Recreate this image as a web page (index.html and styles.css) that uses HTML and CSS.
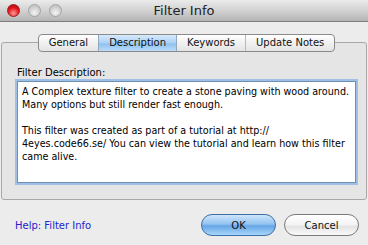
FILE: index.html
```html
<!DOCTYPE html>
<html lang="en">
<head>
    <meta charset="UTF-8">
    <meta name="viewport" content="width=device-width, initial-scale=1.0">
    <title>Filter Info</title>
    <link rel="stylesheet" href="styles.css">
</head>
<body>
    <div class="window">
        <header class="titlebar">
            <div class="lights">
                <span class="light red"></span>
                <span class="light"></span>
                <span class="light"></span>
            </div>
            <h1>Filter Info</h1>
        </header>

        <div class="panel">
            <div class="tabs">
                <span class="tab">General</span>
                <span class="tab active">Description</span>
                <span class="tab">Keywords</span>
                <span class="tab">Update Notes</span>
            </div>

            <label class="field-label">Filter Description:</label>
            <div class="textbox">A Complex texture filter to create a stone paving with wood around.
Many options but still render fast enough.

This filter was created as part of a tutorial at http://
4eyes.code66.se/ You can view the tutorial and learn how this filter
came alive.</div>
        </div>

        <footer class="footer">
            <a class="help-link" href="#">Help: Filter Info</a>
            <div class="buttons">
                <button class="btn btn-default">OK</button>
                <button class="btn">Cancel</button>
            </div>
        </footer>
    </div>
</body>
</html>
```

FILE: styles.css
```css
body {
    margin: 0;
    font-family: "DejaVu Sans", sans-serif;
    font-size: 10px;
    color: #000;
    background-color: #ececec;
}

.window {
    width: 368px;
    height: 245px;
    overflow: hidden;
}

.titlebar {
    height: 22px;
    display: flex;
    align-items: center;
    position: relative;
    background: linear-gradient(#ebebeb, #d2d2d2 50%, #b4b4b4);
    border-bottom: 1px solid #7d7d7d;
    box-sizing: border-box;
}

.lights {
    display: flex;
    gap: 8px;
    padding-left: 7px;
}

.light {
    width: 13px;
    height: 13px;
    border-radius: 50%;
    box-sizing: border-box;
    border: 1px solid #a4a4a4;
    background: radial-gradient(circle at 50% 70%, #f4f4f4, #c6c6c6 70%);
}

.light.red {
    border-color: #9a1c1c;
    background: radial-gradient(circle at 50% 75%, #ff9a9a, #e3151c 55%, #a20b0b);
}

.titlebar h1 {
    position: absolute;
    left: 0;
    right: 0;
    margin: 0;
    text-align: center;
    font-size: 13px;
    font-weight: normal;
    color: #222;
}

.panel {
    margin: 20px 1px 0;
    height: 158px;
    box-sizing: border-box;
    border: 1px solid #a8a8a8;
    border-radius: 3px;
    background-color: #e5e5e5;
    padding: 0 10px 0 15px;
}

.tabs {
    display: flex;
    justify-content: center;
    margin: -9px auto 0;
    width: max-content;
    border: 1px solid #8a8a8a;
    border-radius: 4px;
    background: linear-gradient(#ffffff, #f0f0f0 50%, #e4e4e4);
    overflow: hidden;
}

.tab {
    padding: 0 10px;
    height: 16px;
    line-height: 16px;
    border-left: 1px solid #b8b8b8;
    color: #111;
}

.tab:first-child {
    border-left: none;
}

.tab.active {
    background: linear-gradient(#d8eafb, #a9d0f5 50%, #8ec0ef 55%, #bcdcf9);
    border-left-color: #8fa6bd;
}

.tab.active + .tab {
    border-left-color: #8fa6bd;
}

.field-label {
    display: block;
    margin-top: 14px;
    line-height: 13px;
}

.textbox {
    margin-top: 2px;
    height: 102px;
    box-sizing: border-box;
    background: #fff;
    border: 1px solid #6f8fb5;
    box-shadow: 0 0 0 2px #9fc0e6;
    padding: 3px 4px;
    line-height: 13px;
    white-space: pre-line;
    font-size: 9.6px;
}

.footer {
    display: flex;
    align-items: center;
    justify-content: space-between;
    padding: 14px 9px 0 15px;
}

.help-link {
    color: #2222cc;
    text-decoration: none;
}

.buttons {
    display: flex;
    gap: 8px;
}

.btn {
    width: 75px;
    height: 22px;
    border-radius: 11px;
    border: 1px solid #7a7a7a;
    background: linear-gradient(#ffffff, #f3f3f3 50%, #e2e2e2 55%, #fafafa);
    font-family: "DejaVu Sans", sans-serif;
    font-size: 10px;
    color: #111;
    padding: 0;
}

.btn-default {
    border-color: #3d6ea5;
    background: linear-gradient(#cfe6fb, #93c3f0 45%, #66a6e6 55%, #a8d6fb);
}
```
